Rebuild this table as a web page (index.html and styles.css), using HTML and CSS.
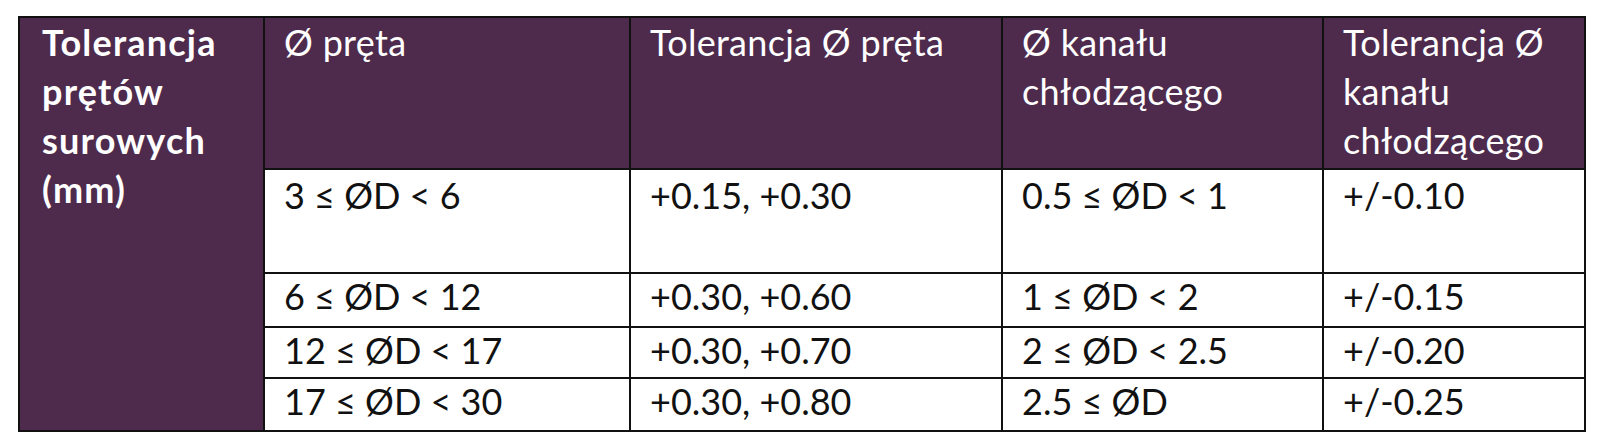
FILE: index.html
```html
<!DOCTYPE html>
<html lang="pl">
<head>
<meta charset="utf-8">
<title>Tolerancja prętów surowych</title>
<link rel="stylesheet" href="styles.css">
</head>
<body>
<table class="tol">
  <colgroup>
    <col class="c1"><col class="c2"><col class="c3"><col class="c4"><col class="c5">
  </colgroup>
  <tr class="head">
    <th class="side" rowspan="5">Tolerancja<br>prętów<br>surowych<br>(mm)</th>
    <th>Ø pręta</th>
    <th>Tolerancja Ø pręta</th>
    <th>Ø kanału<br>chłodzącego</th>
    <th>Tolerancja Ø<br>kanału<br>chłodzącego</th>
  </tr>
  <tr class="r1">
    <td>3 ≤ ØD &lt; 6</td>
    <td>+0.15, +0.30</td>
    <td>0.5 ≤ ØD &lt; 1</td>
    <td>+/-0.10</td>
  </tr>
  <tr class="r2">
    <td>6 ≤ ØD &lt; 12</td>
    <td>+0.30, +0.60</td>
    <td>1 ≤ ØD &lt; 2</td>
    <td>+/-0.15</td>
  </tr>
  <tr class="r3">
    <td>12 ≤ ØD &lt; 17</td>
    <td>+0.30, +0.70</td>
    <td>2 ≤ ØD &lt; 2.5</td>
    <td>+/-0.20</td>
  </tr>
  <tr class="r4">
    <td>17 ≤ ØD &lt; 30</td>
    <td>+0.30, +0.80</td>
    <td>2.5 ≤ ØD</td>
    <td>+/-0.25</td>
  </tr>
</table>
</body>
</html>
```
FILE: styles.css
```css
html, body {
  margin: 0;
  padding: 0;
  background: #ffffff;
}
body {
  padding: 16px 0 0 18px;
  font-family: Lato, "Open Sans", "Liberation Sans", sans-serif;
}
.tol {
  border-collapse: collapse;
  table-layout: fixed;
  width: 1566px;
  font-size: 36px;
  line-height: 49px;
}
.c1 { width: 245px; }
.c2 { width: 366px; }
.c3 { width: 372px; }
.c4 { width: 321px; }
.c5 { width: 262px; }
.tol th, .tol td {
  border: 2px solid #111111;
  text-align: left;
  vertical-align: top;
  padding: 0 10px 0 19px;
  white-space: nowrap;
}
.tol th {
  background: #4e2b4d;
  color: #ffffff;
  font-weight: 400;
  letter-spacing: 0.3px;
}
.tol th.side {
  font-weight: 700;
  padding-left: 22px;
  letter-spacing: 1.2px;
}
.tol td {
  color: #111111;
  line-height: 44px;
}
.tol .r1 td {
  padding-top: 3px;
}
.head { height: 152px; }
.r1 { height: 104px; }
.r2 { height: 54px; }
.r3 { height: 51px; }
.r4 { height: 53px; }
```
